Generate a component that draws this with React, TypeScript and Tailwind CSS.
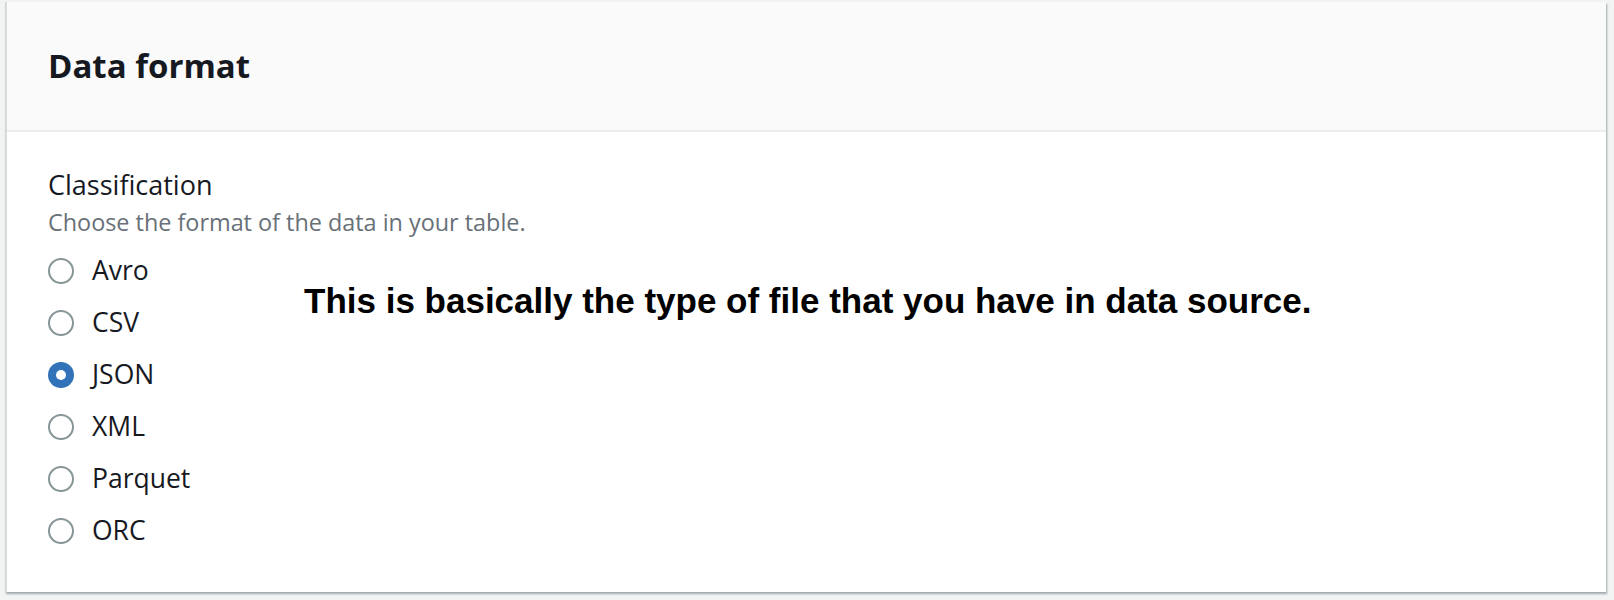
const formats = ["Avro", "CSV", "JSON", "XML", "Parquet", "ORC"];
const selected = "JSON";

function Radio({ checked }: { checked: boolean }) {
  return checked ? (
    <span className="flex h-[26px] w-[26px] shrink-0 items-center justify-center rounded-full bg-[#3172b8]">
      <span className="h-[10px] w-[10px] rounded-full bg-white" />
    </span>
  ) : (
    <span className="h-[26px] w-[26px] shrink-0 rounded-full border-[2px] border-[#879596] bg-white" />
  );
}

function Option({ label, checked }: { label: string; checked: boolean }) {
  return (
    <div className="flex h-[52px] items-center gap-[18px]">
      <Radio checked={checked} />
      <span className="text-[26.5px] text-[#16191f]">{label}</span>
    </div>
  );
}

export default function App() {
  return (
    <div className="h-[600px] w-full bg-[#f2f3f3] pl-[5px] pr-[8px] pt-[2px] font-['Open_Sans',sans-serif]">
      <div className="h-[590px] border-l-[2px] border-[#d5dbdb] bg-white shadow-[1px_2px_2px_rgba(0,28,36,0.35)]">
        <div className="flex h-[130px] items-center border-b-[2px] border-[#eaeded] bg-[#fafafa] pl-[41px]">
          <h2 className="text-[33px] font-bold text-[#16191f]">Data format</h2>
        </div>
        <div className="pl-[41px] pt-[36px]">
          <div className="text-[27px] leading-[34px] text-[#16191f]">Classification</div>
          <div className="mt-[3px] text-[23.4px] leading-[34px] text-[#687078]">
            Choose the format of the data in your table.
          </div>
          <div className="mt-[6px] flex">
            <div className="w-[256px]">
              {formats.map((f) => (
                <Option key={f} label={f} checked={f === selected} />
              ))}
            </div>
            <p className="mt-[36px] whitespace-nowrap font-['Liberation_Sans',Arial,sans-serif] text-[35px] leading-[40px] font-bold text-black">
              This is basically the type of file that you have in data source.
            </p>
          </div>
        </div>
      </div>
    </div>
  );
}
